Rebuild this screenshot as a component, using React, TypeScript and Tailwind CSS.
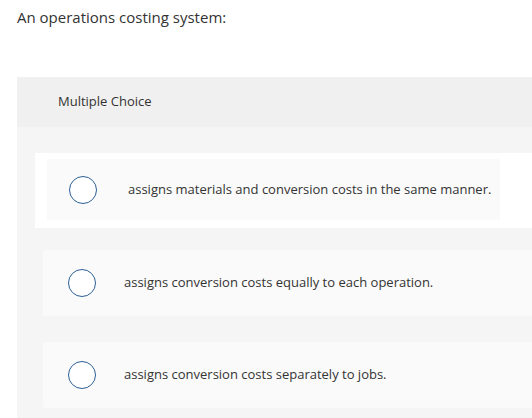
import React from 'react'

function Radio() {
  return (
    <span className="block h-[28px] w-[28px] shrink-0 rounded-full border-[1.5px] border-[#2b5f95] bg-white" />
  )
}

const options = [
  'assigns conversion costs equally to each operation.',
  'assigns conversion costs separately to jobs.',
]

export default function App() {
  return (
    <div className="h-[418px] w-[532px] overflow-hidden bg-white font-['Open_Sans',sans-serif] text-[#333]">
      <p className="pl-[17px] pt-[8px] text-[15px] leading-[18px]">An operations costing system:</p>

      <div className="ml-[17px] mt-[51px] h-full bg-[#f5f5f5]">
        {/* header */}
        <div className="flex h-[50px] items-center bg-[#f0f0f0] pl-[41px] text-[13px]">Multiple Choice</div>

        <div className="pt-[26px]">
          {/* focused option */}
          <div className="ml-[18px] bg-white pb-[8px] pl-[12px] pt-[6px]">
            <div className="flex h-[61px] w-[453px] items-center bg-[#fafafa] pl-[22px]">
              <Radio />
              <span className="ml-[31px] text-[13px]">assigns materials and conversion costs in the same manner.</span>
            </div>
          </div>

          {options.map((text, i) => (
            <div
              key={text}
              className={
                'ml-[26px] flex h-[66px] items-center rounded-l-[3px] bg-[#fafafa] pl-[25px] ' +
                (i === 0 ? 'mt-[22px]' : 'mt-[26px]')
              }
            >
              <Radio />
              <span className="ml-[28px] text-[13px]">{text}</span>
            </div>
          ))}
        </div>
      </div>
    </div>
  )
}
